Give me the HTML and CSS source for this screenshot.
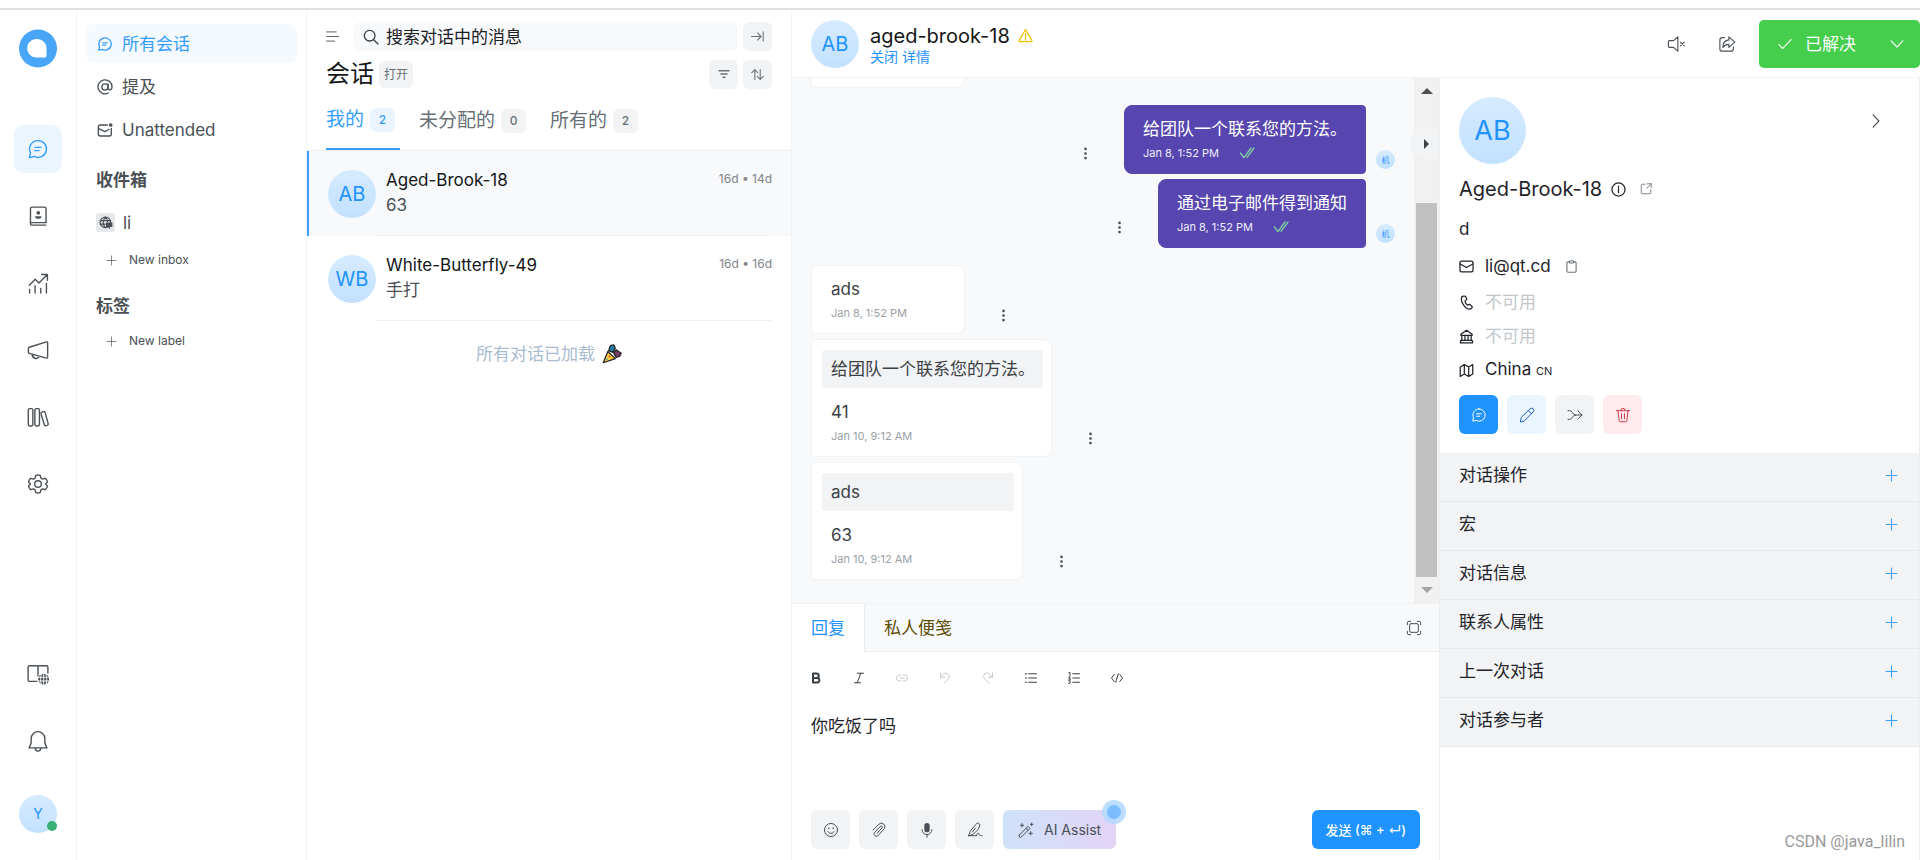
FILE: index.html
```html
<!DOCTYPE html>
<html lang="zh-CN">
<head>
    <meta charset="UTF-8">
    <meta name="viewport" content="width=device-width, initial-scale=1.0">
    <title>会话</title>
    <link rel="stylesheet" href="styles.css">
</head>
<body>
    <svg class="sprite" aria-hidden="true">
        <symbol id="chat" viewBox="0 0 24 24"><path d="M12 2.8a9.2 9.2 0 1 1-4.3 17.3L3.2 21.3a.5.5 0 0 1-.6-.6l1.3-4.4A9.2 9.2 0 0 1 12 2.8z"/><path d="M8.5 10.2h7M8.5 13.8h4.6"/></symbol>
        <symbol id="contacts" viewBox="0 0 24 24"><path d="M21 19.2H5.2a1.4 1.4 0 0 0 0 2.8H20.5M3.8 20.5V4.2A1.9 1.9 0 0 1 5.7 2.3h13.2a1.9 1.9 0 0 1 1.9 1.9v15"/><circle class="solid" cx="12.3" cy="8.6" r="2"/><path class="solid" d="M8.8 12.2h7c0 2-1.5 2.8-3.5 2.8s-3.5-.8-3.5-2.8z"/></symbol>
        <symbol id="reports" viewBox="0 0 24 24"><path d="M2.5 14.5 9 8l4 4 9-9M16 2.7h6.3V9M2.8 19v4M8.8 15v8M15 18v5M21.2 12.5V23"/></symbol>
        <symbol id="campaign" viewBox="0 0 24 24"><path d="M22.5 4.2v15.6a1 1 0 0 1-1.3 1L2.5 15.6a1.4 1.4 0 0 1-1-1.3v-4a1.4 1.4 0 0 1 1-1.3l18.700-5.800a1 1 0 0 1 1.300 1zM5.800 16.600a4 4 0 0 0 7.600 2.200"/></symbol>
        <symbol id="library" viewBox="0 0 24 24"><rect x="1.4" y="2.8" width="5" height="19" rx="1.5"/><rect x="8.6" y="2.8" width="5" height="19" rx="1.5"/><path d="m16.3 6.6 1.7-.5a1.5 1.5 0 0 1 1.8 1.1l3.3 12.1a1.5 1.5 0 0 1-1 1.8l-1.4.4a1.5 1.5 0 0 1-1.8-1L15.3 8.4a1.5 1.5 0 0 1 1-1.8z"/></symbol>
        <symbol id="settings" viewBox="0 0 24 24"><circle cx="12" cy="12" r="3.6"/><path d="M9.6 2.6Q12 1.9 14.4 2.6L15.2 5.7 17 6.7 20 5.8Q21.8 7.5 22.4 9.9L20.2 12l2.2 2.1Q21.8 16.5 20 18.2L17 17.3 15.2 18.3 14.4 21.4Q12 22.1 9.6 21.4L8.8 18.3 7 17.3 4 18.2Q2.2 16.5 1.6 14.1L3.8 12 1.6 9.9Q2.2 7.5 4 5.8L7 6.7 8.8 5.7z"/></symbol>
        <symbol id="docs" viewBox="0 0 24 24"><path d="M11 20H2.7A1.5 1.5 0 0 1 1.2 18.5v-14A1.5 1.5 0 0 1 2.7 3H10.5A1.5 1.5 0 0 1 12 4.5V14M12 4.5A1.5 1.5 0 0 1 13.5 3h7.8a1.5 1.5 0 0 1 1.5 1.5V11"/><circle class="solid" cx="18.2" cy="17.6" r="6"/><path class="cut" d="M12 15.6h12.4M12 19.6h12.4M18.2 11.5v12.2M15.6 12c-1 4-1 7.5 0 11.5M20.8 12c1 4 1 7.5 0 11.5"/></symbol>
        <symbol id="bell" viewBox="0 0 24 24"><path d="M12 1.8a7.5 7.5 0 0 0-7.5 7.5v5L2.3 19.5h19.4l-2.2-5.2v-5A7.5 7.5 0 0 0 12 1.8zM9 20a3 3 0 0 0 6 0"/></symbol>
        <symbol id="mention" viewBox="0 0 24 24"><circle cx="12" cy="12" r="4.7"/><path d="M16.7 7.3v6.2c0 4 5.8 3.6 5.8-1.5A10.5 10.5 0 1 0 17 21"/></symbol>
        <symbol id="unread" viewBox="0 0 24 24"><path d="M15.5 4.500H5a3 3 0 0 0-3 3V18a3 3 0 0 0 3 3h13.500a3 3 0 0 0 3-3V9.500M2.500 10l9.300 4.500 6-3.300"/><circle class="solid" cx="20.5" cy="4.5" r="2.8"/></symbol>
        <symbol id="globe" viewBox="0 0 24 24"><circle cx="11" cy="11" r="9"/><path d="M2 8h18M2 14h9M11 2c-5 5-5 13 0 18M11 2c2.5 2.5 3.8 5.5 3.8 8"/><path class="solid" d="M12 11h11v8h-4v3.500L15.500 19H12z"/></symbol>
        <symbol id="plus" viewBox="0 0 24 24"><path d="M12 2v20M2 12h20"/></symbol>
        <symbol id="menu" viewBox="0 0 24 24"><path d="M1 3.5h18M1 12h22M1 20.5h15"/></symbol>
        <symbol id="search" viewBox="0 0 24 24"><circle cx="10" cy="10" r="8"/><path d="m16 16 6.5 6.5"/></symbol>
        <symbol id="collapse" viewBox="0 0 24 24"><path d="M1 12h17M12 5.5l6.5 6.5-6.5 6.5M22.500 3.500v17"/></symbol>
        <symbol id="filter" viewBox="0 0 24 24"><path d="M2 5.5h20M6 12h12M10 18.5h4"/></symbol>
        <symbol id="sort" viewBox="0 0 24 24"><path d="M7 21V3M1.5 8.5 7 3l5.5 5.5M17 3v18M11.5 15.5 17 21l5.5-5.5"/></symbol>
        <symbol id="warning" viewBox="0 0 24 24"><path d="M12 2.5 22.3 20.2a1 1 0 0 1-.8 1.5H2.5a1 1 0 0 1-.8-1.5zM12 9v6M12 17v2"/></symbol>
        <symbol id="mute" viewBox="0 0 24 24"><path d="M14.5 2.500v19L8.700 16.500H3.300a1.500 1.500 0 0 1-1.500-1.500V9A1.500 1.500 0 0 1 3.300 7.500h5.400zM18 9.500l5 5M23 9.500l-5 5"/></symbol>
        <symbol id="share" viewBox="0 0 24 24"><path d="M8.5 3.500H5.500a3 3 0 0 0-3 3V18.500a3 3 0 0 0 3 3h12a3 3 0 0 0 3-3V16M14.500 2.500l8 7-8 7V12.500c-4 0-6 1-8 4 0-6 3-9.500 8-10z"/></symbol>
        <symbol id="check" viewBox="0 0 24 24"><path d="m1.5 13 6.5 6.5L22.5 4.5"/></symbol>
        <symbol id="down" viewBox="0 0 24 24"><path d="m2 6.5 10 11 10-11"/></symbol>
        <symbol id="right" viewBox="0 0 24 24"><path d="m7 1.5 10 10.5L7 22.5"/></symbol>
        <symbol id="double-check" viewBox="0 0 24 24"><path d="m2 12 5.5 7L18 4.5M12 18.5 22.5 4.5"/></symbol>
        <symbol id="dots" viewBox="0 0 24 24"><circle class="solid" cx="12" cy="3.5" r="2.5"/><circle class="solid" cx="12" cy="12" r="2.5"/><circle class="solid" cx="12" cy="20.5" r="2.5"/></symbol>
        <symbol id="expand" viewBox="0 0 24 24"><path d="M2 7V4.500A2.500 2.500 0 0 1 4.500 2H7M17 2h2.500A2.500 2.500 0 0 1 22 4.500V7M22 17v2.500a2.500 2.500 0 0 1-2.500 2.500H17M7 22H4.500A2.500 2.500 0 0 1 2 19.500V17"/><rect x="5.5" y="5.5" width="13" height="13" rx="2"/></symbol>
        <symbol id="bold" viewBox="0 0 24 24"><path d="M6 3h7a4.4 4.4 0 0 1 0 8.8H6zM6 11.8h8a4.6 4.6 0 0 1 0 9.2H6z"/></symbol>
        <symbol id="italic" viewBox="0 0 24 24"><path d="M9 2.5h12M3 21.5h12M15.5 2.5 8.5 21.5"/></symbol>
        <symbol id="link" viewBox="0 0 24 24"><path d="M9.5 6H7a6 6 0 0 0 0 12h2.500M14.500 6H17a6 6 0 0 1 0 12h-2.500M7.500 12h9"/></symbol>
        <symbol id="undo" viewBox="0 0 24 24"><path d="M3 2v8.500h8.500M3.500 10 9 4.500a6.500 6.500 0 0 1 10 9L10 22.500"/></symbol>
        <symbol id="redo" viewBox="0 0 24 24"><path d="M21 2v8.500h-8.500M20.500 10 15 4.500a6.500 6.500 0 0 0-10 9L14 22.500"/></symbol>
        <symbol id="list" viewBox="0 0 24 24"><path d="M7.5 3.5H23M7.5 12H23M7.5 20.5H23M1 3.500h2.500M1 12h2.500M1 20.500h2.500"/></symbol>
        <symbol id="ordered" viewBox="0 0 24 24"><path d="M9.5 3.5H23M9.5 12H23M9.5 20.5H23M1.5 1.5 4 .8V7M1.5 10H4.5L1.5 14.5H5M1.5 17.5H4.5L3 20c3 0 2.5 3.5-1.5 3"/></symbol>
        <symbol id="code" viewBox="0 0 24 24"><path d="M6.5 5 1 12l5.5 7M17.5 5 23 12l-5.500 7M14.500 3.500l-5 17"/></symbol>
        <symbol id="smile" viewBox="0 0 24 24"><circle cx="12" cy="12" r="9.8"/><path d="M7.5 14.5c2 3.5 7 3.5 9 0"/><circle class="solid" cx="8.7" cy="9.5" r="1.2"/><circle class="solid" cx="15.3" cy="9.5" r="1.2"/></symbol>
        <symbol id="clip" viewBox="0 0 24 24"><path d="M3 12 11.5 3.7a5.3 5.3 0 0 1 8.5 6.3l-9.5 10.5a3.6 3.6 0 0 1-5.5-4.5l9-9.5a1.7 1.7 0 0 1 2.6 2.2L9.5 16.5"/></symbol>
        <symbol id="mic" viewBox="0 0 24 24"><rect class="solid" x="8" y="1.5" width="8" height="14" rx="4"/><path d="M4.5 11.5a7.5 7.5 0 0 0 15 0M12 19v4"/></symbol>
        <symbol id="signature" viewBox="0 0 24 24"><path d="M2.500 20.500 5 13.500 13.500 3.500a3 3 0 0 1 5.500 2.500C18 10 14 15 8.500 18.500zM8 15l5-6M14 20.500c1.500-4 3.500-4.500 4-3s0 3.500 4.500 3M2.500 20.500H14"/></symbol>
        <symbol id="wand" viewBox="0 0 24 24"><path d="m2 19.5 13-13 3 3-13 13a2 2 0 0 1-3-3zM12 9.5l3 3M6 2.500v5M3.500 5h5M19 14.500v5M16.500 17h5M20.500 1.500v4M18.500 3.500h4"/></symbol>
        <symbol id="info" viewBox="0 0 24 24"><circle cx="12" cy="12" r="10.5"/><path d="M12 10.5V17M12 6.5v2"/></symbol>
        <symbol id="external" viewBox="0 0 24 24"><path d="M10 2.500H4.500a2 2 0 0 0-2 2v15a2 2 0 0 0 2 2h15a2 2 0 0 0 2-2V14M14.500 1.500h8v8M22.500 1.500 13.500 10.500"/></symbol>
        <symbol id="mail" viewBox="0 0 24 24"><rect x="1.5" y="3.5" width="21" height="17" rx="3"/><path d="m2 8 10 5.5L22 8"/></symbol>
        <symbol id="clipboard" viewBox="0 0 24 24"><path d="M8 3.500H5.500a2 2 0 0 0-2 2v15a2 2 0 0 0 2 2h13a2 2 0 0 0 2-2v-15a2 2 0 0 0-2-2H16"/><rect x="8" y="1.5" width="8" height="4" rx="2"/></symbol>
        <symbol id="phone" viewBox="0 0 24 24"><path d="M7 1.8 4.5 3C2 8 6.5 18 13 21.5c3 1.6 5.5 1.3 7.5-.7l.8-1.8-4-4-4 1.200c-2-1.700-3.300-3.900-3.800-6.400L12.500 7 10.500 2z"/></symbol>
        <symbol id="bank" viewBox="0 0 24 24"><path d="M12 2 3 8.5V10h18V8.500zM4.500 10.500V18M9.500 10.500V18M14.500 10.500V18M19.500 10.500V18M3 18h18l1 4H2z"/></symbol>
        <symbol id="map" viewBox="0 0 24 24"><path d="m2 6.500 6.500-4 7 4 6.500-4v15l-6.500 4-7-4-6.500 4zM8.500 2.500v15M15.500 6.500v15"/></symbol>
        <symbol id="pencil" viewBox="0 0 24 24"><path d="M2 22 3.5 15.500 16.500 2.800a3.300 3.300 0 0 1 4.700 4.700L8.500 20.500zM14 5.500l4.500 4.500"/></symbol>
        <symbol id="merge" viewBox="0 0 24 24"><path d="M1.5 5.500h2.500c4.500 0 4 6.500 9 6.500h9.500M1.500 18.500H4c4.500 0 4-6.500 9-6.500M16.500 6l6 6-6 6"/></symbol>
        <symbol id="trash" viewBox="0 0 24 24"><path d="M2 5.5h20M4.5 5.5l1.7 15a2 2 0 0 0 2 1.7h7.6a2 2 0 0 0 2-1.7l1.7-15M8.5 5.5a3.5 3.5 0 0 1 7 0M9.8 10v7.5M14.2 10v7.5"/></symbol>
        <symbol id="party" viewBox="0 0 24 24"><path fill="#ffc83d" stroke="#222" stroke-width="1.5" d="M7 9 1.500 22.500 16 17.500z"/><path fill="#1e7fa8" stroke="#222" d="M8 8l2-6 4-1 2 4-3 5z"/><path fill="#7a3b69" stroke="#222" d="M14 11l3-4 3 2 3 2-2 4-4 1z"/><circle cx="9" cy="15" r="1.2" fill="#e0533f" stroke="none"/><circle cx="6" cy="18.5" r="1" fill="#3f9be0" stroke="none"/></symbol>
    </svg>

    <div class="app">
        <nav class="rail" aria-label="主菜单">
            <a href="#" class="logo" aria-label="首页">
                <svg viewBox="0 0 38 38"><circle cx="19" cy="19" r="19" fill="#48a5f7"/><path fill="#fff" d="M18.5 9.5A9.3 9.3 0 1 0 18.5 28H26a1.5 1.5 0 0 0 1.500-1.500V18.500a9 9 0 0 0-9-9z"/></svg>
            </a>
            <div class="rail-menu">
                <a href="#" class="rail-link active" aria-label="会话"><svg class="icon"><use href="#chat"/></svg></a>
                <a href="#" class="rail-link" aria-label="联系人"><svg class="icon"><use href="#contacts"/></svg></a>
                <a href="#" class="rail-link" aria-label="报告"><svg class="icon"><use href="#reports"/></svg></a>
                <a href="#" class="rail-link" aria-label="活动"><svg class="icon"><use href="#campaign"/></svg></a>
                <a href="#" class="rail-link" aria-label="帮助中心"><svg class="icon"><use href="#library"/></svg></a>
                <a href="#" class="rail-link" aria-label="设置"><svg class="icon"><use href="#settings"/></svg></a>
            </div>
            <div class="rail-menu rail-bottom">
                <a href="#" class="rail-link" aria-label="文档"><svg class="icon"><use href="#docs"/></svg></a>
                <a href="#" class="rail-link" aria-label="通知"><svg class="icon"><use href="#bell"/></svg></a>
            </div>
            <button class="avatar me" aria-label="个人资料">Y<span class="status"></span></button>
        </nav>

        <aside class="sidebar">
            <ul class="side-list">
                <li><a href="#" class="side-link active"><svg class="icon"><use href="#chat"/></svg>所有会话</a></li>
                <li><a href="#" class="side-link"><svg class="icon"><use href="#mention"/></svg>提及</a></li>
                <li><a href="#" class="side-link"><svg class="icon"><use href="#unread"/></svg>Unattended</a></li>
            </ul>
            <h2 class="side-title">收件箱</h2>
            <a href="#" class="side-link"><span class="inbox-icon"><svg class="icon"><use href="#globe"/></svg></span>li</a>
            <button class="side-new"><svg class="icon"><use href="#plus"/></svg>New inbox</button>
            <h2 class="side-title second">标签</h2>
            <button class="side-new"><svg class="icon"><use href="#plus"/></svg>New label</button>
        </aside>

        <section class="chats">
            <div class="chats-search">
                <button class="plain" aria-label="菜单"><svg class="icon"><use href="#menu"/></svg></button>
                <label class="search">
                    <svg class="icon"><use href="#search"/></svg>
                    <input type="search" placeholder="搜索对话中的消息" aria-label="搜索对话中的消息">
                </label>
                <button class="small-btn" aria-label="展开"><svg class="icon"><use href="#collapse"/></svg></button>
            </div>
            <div class="chats-head">
                <h1>会话</h1>
                <span class="state">打开</span>
                <button class="small-btn first" aria-label="筛选"><svg class="icon"><use href="#filter"/></svg></button>
                <button class="small-btn" aria-label="排序"><svg class="icon"><use href="#sort"/></svg></button>
            </div>
            <div class="tabs" role="tablist">
                <button class="tab active" role="tab">我的<span class="count">2</span></button>
                <button class="tab" role="tab">未分配的<span class="count">0</span></button>
                <button class="tab" role="tab">所有的<span class="count">2</span></button>
            </div>
            <a href="#" class="chat-item active">
                <span class="avatar">AB</span>
                <span class="chat-info">
                    <span class="chat-row"><span class="chat-name">Aged-Brook-18</span><span class="chat-time">16d • 14d</span></span>
                    <span class="chat-text">63</span>
                </span>
            </a>
            <a href="#" class="chat-item">
                <span class="avatar">WB</span>
                <span class="chat-info">
                    <span class="chat-row"><span class="chat-name">White-Butterfly-49</span><span class="chat-time">16d • 16d</span></span>
                    <span class="chat-text">手打</span>
                </span>
            </a>
            <p class="chats-end">所有对话已加载 <svg class="icon party"><use href="#party"/></svg></p>
        </section>

        <main class="conversation">
            <header class="conv-head">
                <span class="avatar">AB</span>
                <div class="conv-user">
                    <h2>aged-brook-18 <svg class="icon warn"><use href="#warning"/></svg></h2>
                    <a href="#">关闭 详情</a>
                </div>
                <button class="plain head-icon" aria-label="静音"><svg class="icon"><use href="#mute"/></svg></button>
                <button class="plain head-icon" aria-label="分享"><svg class="icon"><use href="#share"/></svg></button>
                <div class="resolve">
                    <button class="resolve-main"><svg class="icon"><use href="#check"/></svg>已解决</button>
                    <button class="resolve-more" aria-label="更多"><svg class="icon"><use href="#down"/></svg></button>
                </div>
            </header>

            <div class="conv-body">
                <section class="chat-box">
                    <div class="messages-wrap">
                        <div class="messages">
                            <div class="message in"><div class="bubble cut-off"></div></div>
                            <div class="message out first">
                                <button class="plain more" aria-label="更多"><svg class="icon"><use href="#dots"/></svg></button>
                                <div class="bubble">
                                    <p>给团队一个联系您的方法。</p>
                                    <div class="meta">Jan 8, 1:52 PM<svg class="icon"><use href="#double-check"/></svg></div>
                                </div>
                                <span class="avatar bot">机</span>
                            </div>
                            <div class="message out">
                                <button class="plain more" aria-label="更多"><svg class="icon"><use href="#dots"/></svg></button>
                                <div class="bubble">
                                    <p>通过电子邮件得到通知</p>
                                    <div class="meta">Jan 8, 1:52 PM<svg class="icon"><use href="#double-check"/></svg></div>
                                </div>
                                <span class="avatar bot">机</span>
                            </div>
                            <div class="message in first">
                                <div class="bubble">
                                    <p>ads</p>
                                    <div class="meta">Jan 8, 1:52 PM</div>
                                </div>
                                <button class="plain more" aria-label="更多"><svg class="icon"><use href="#dots"/></svg></button>
                            </div>
                            <div class="message in">
                                <div class="bubble with-quote">
                                    <blockquote>给团队一个联系您的方法。</blockquote>
                                    <p>41</p>
                                    <div class="meta">Jan 10, 9:12 AM</div>
                                </div>
                                <button class="plain more" aria-label="更多"><svg class="icon"><use href="#dots"/></svg></button>
                            </div>
                            <div class="message in">
                                <div class="bubble with-quote short">
                                    <blockquote>ads</blockquote>
                                    <p>63</p>
                                    <div class="meta">Jan 10, 9:12 AM</div>
                                </div>
                                <button class="plain more" aria-label="更多"><svg class="icon"><use href="#dots"/></svg></button>
                            </div>
                        </div>
                        <div class="scrollbar" aria-hidden="true">
                            <span class="arrow up"></span>
                            <span class="track"><span class="thumb"></span></span>
                            <span class="arrow down"></span>
                        </div>
                        <button class="toggle" aria-label="收起侧栏"><span></span></button>
                    </div>

                    <form class="reply">
                        <div class="reply-tabs">
                            <button type="button" class="reply-tab active">回复</button>
                            <button type="button" class="reply-tab note">私人便笺</button>
                            <button type="button" class="plain expand" aria-label="展开"><svg class="icon"><use href="#expand"/></svg></button>
                        </div>
                        <div class="format">
                            <button type="button" class="plain bold" aria-label="粗体"><svg class="icon"><use href="#bold"/></svg></button>
                            <button type="button" class="plain" aria-label="斜体"><svg class="icon"><use href="#italic"/></svg></button>
                            <button type="button" class="plain off" aria-label="链接"><svg class="icon"><use href="#link"/></svg></button>
                            <button type="button" class="plain off" aria-label="撤销"><svg class="icon"><use href="#undo"/></svg></button>
                            <button type="button" class="plain off" aria-label="重做"><svg class="icon"><use href="#redo"/></svg></button>
                            <button type="button" class="plain" aria-label="列表"><svg class="icon"><use href="#list"/></svg></button>
                            <button type="button" class="plain" aria-label="编号列表"><svg class="icon"><use href="#ordered"/></svg></button>
                            <button type="button" class="plain" aria-label="代码"><svg class="icon"><use href="#code"/></svg></button>
                        </div>
                        <textarea class="editor" aria-label="回复内容">你吃饭了吗</textarea>
                        <div class="reply-actions">
                            <button type="button" class="tool" aria-label="表情"><svg class="icon"><use href="#smile"/></svg></button>
                            <button type="button" class="tool" aria-label="附件"><svg class="icon"><use href="#clip"/></svg></button>
                            <button type="button" class="tool" aria-label="录音"><svg class="icon"><use href="#mic"/></svg></button>
                            <button type="button" class="tool" aria-label="签名"><svg class="icon"><use href="#signature"/></svg></button>
                            <button type="button" class="ai"><svg class="icon"><use href="#wand"/></svg>AI Assist<span class="pulse"></span></button>
                            <button type="button" class="send">发送 (⌘ + ↵)</button>
                        </div>
                    </form>
                </section>

                <aside class="contact">
                    <div class="profile">
                        <div class="profile-top">
                            <span class="avatar big">AB</span>
                            <button class="plain" aria-label="关闭"><svg class="icon"><use href="#right"/></svg></button>
                        </div>
                        <h3 class="profile-name">Aged-Brook-18 <svg class="icon"><use href="#info"/></svg><svg class="icon ext"><use href="#external"/></svg></h3>
                        <p class="bio">d</p>
                        <ul class="details">
                            <li class="email"><svg class="icon"><use href="#mail"/></svg><a href="#">li@qt.cd</a><svg class="icon copy"><use href="#clipboard"/></svg></li>
                            <li class="empty"><svg class="icon"><use href="#phone"/></svg><span>不可用</span></li>
                            <li class="empty"><svg class="icon"><use href="#bank"/></svg><span>不可用</span></li>
                            <li><svg class="icon"><use href="#map"/></svg><span>China <small>CN</small></span></li>
                        </ul>
                        <div class="profile-actions">
                            <button class="tool primary" aria-label="新消息"><svg class="icon"><use href="#chat"/></svg></button>
                            <button class="tool edit" aria-label="编辑"><svg class="icon"><use href="#pencil"/></svg></button>
                            <button class="tool" aria-label="合并"><svg class="icon"><use href="#merge"/></svg></button>
                            <button class="tool delete" aria-label="删除"><svg class="icon"><use href="#trash"/></svg></button>
                        </div>
                    </div>
                    <div class="accordion">
                        <button>对话操作<svg class="icon"><use href="#plus"/></svg></button>
                        <button>宏<svg class="icon"><use href="#plus"/></svg></button>
                        <button>对话信息<svg class="icon"><use href="#plus"/></svg></button>
                        <button>联系人属性<svg class="icon"><use href="#plus"/></svg></button>
                        <button>上一次对话<svg class="icon"><use href="#plus"/></svg></button>
                        <button>对话参与者<svg class="icon"><use href="#plus"/></svg></button>
                    </div>
                    <p class="credit">CSDN @java_lilin</p>
                </aside>
            </div>
        </main>
    </div>
</body>
</html>
```

FILE: styles.css
```css
* {
    box-sizing: border-box;
}

body {
    margin: 0;
    padding-top: 8px;
    height: 100vh;
    background-color: #fff;
    color: #1f2d3d;
    font-family: Inter, "Noto Sans CJK SC", sans-serif;
    font-size: 17px;
    line-height: 24px;
    display: flex;
    flex-direction: column;
}

h1, h2, h3, p, ul, blockquote {
    margin: 0;
    padding: 0;
    font-weight: 400;
}

ul {
    list-style: none;
}

a {
    color: inherit;
    text-decoration: none;
}

button, input, textarea {
    font: inherit;
    color: inherit;
    border: none;
    margin: 0;
    padding: 0;
    background: none;
}

button {
    cursor: pointer;
}

/* Iconos */
.sprite {
    display: none;
}

.icon {
    width: 16px;
    height: 16px;
    flex: none;
    fill: none;
    stroke: currentColor;
    stroke-width: 1.5;
    stroke-linecap: round;
    stroke-linejoin: round;
}

.solid {
    fill: currentColor;
    stroke: none;
}

.cut {
    stroke: #fff;
    stroke-width: 1;
}

.plain {
    display: flex;
    align-items: center;
    justify-content: center;
}

.app {
    flex: 1;
    min-height: 0;
    display: flex;
    border-top: 2px solid #e0e0e0;
}

.avatar {
    position: relative;
    flex: none;
    display: flex;
    align-items: center;
    justify-content: center;
    width: 48px;
    height: 48px;
    border-radius: 50%;
    background: linear-gradient(#d6ebff, #c2e1ff);
    color: #1f93ff;
    font-size: 20px;
}

/* Barra izquierda */
.rail {
    width: 77px;
    flex: none;
    display: flex;
    flex-direction: column;
    align-items: center;
    padding: 19px 0 27px;
    border-right: 1px solid #f0f2f4;
    color: #4a5056;
}

.logo, .logo svg {
    display: block;
    width: 38px;
    height: 39px;
}

.rail-menu {
    display: flex;
    flex-direction: column;
    gap: 19px;
    margin-top: 57px;
}

.rail-link {
    display: flex;
    align-items: center;
    justify-content: center;
    width: 48px;
    height: 48px;
    border-radius: 10px;
}

.rail-link .icon {
    width: 22px;
    height: 22px;
}

.rail-link.active {
    background-color: #ebf5ff;
    color: #369eff;
}

.rail-bottom {
    margin-top: auto;
    margin-bottom: 30px;
}

.me {
    width: 38px;
    height: 38px;
    font-size: 14px;
    background: linear-gradient(#d6ebff, #c2e1ff);
    color: #1f93ff;
}

.status {
    position: absolute;
    right: 0;
    bottom: 2px;
    width: 10px;
    height: 10px;
    border-radius: 50%;
    background-color: #3bb077;
}

/* Sidebar */
.sidebar {
    width: 230px;
    flex: none;
    padding: 14px 9px;
    border-right: 1px solid #f0f2f4;
    color: #4a5056;
}

.side-list {
    display: flex;
    flex-direction: column;
    gap: 4px;
}

.side-link {
    display: flex;
    align-items: center;
    gap: 9px;
    height: 39px;
    padding: 0 11px;
    border-radius: 8px;
}

.side-link .icon {
    stroke-width: 2;
}

.side-link.active {
    background-color: #f5faff;
    color: #369eff;
}

.side-title {
    margin: 19px 0 11px;
    padding-left: 10px;
    font-size: 17px;
    line-height: 24px;
    font-weight: 700;
}

.side-title.second {
    margin-top: 22px;
}

.inbox-icon {
    display: flex;
    align-items: center;
    justify-content: center;
    width: 19px;
    height: 19px;
    margin-left: -1px;
    margin-right: -1px;
    border-radius: 3px;
    background-color: #e6e8eb;
}

.inbox-icon .icon {
    width: 14px;
    height: 14px;
}

.side-new {
    display: flex;
    align-items: center;
    gap: 12px;
    height: 24px;
    margin-top: 6px;
    padding-left: 20px;
    font-size: 12px;
    line-height: 24px;
}

.side-title + .side-new {
    margin-top: 0;
}

.side-new .icon {
    width: 11px;
    height: 11px;
}

/* Lista de conversaciones */
.chats {
    width: 485px;
    flex: none;
    padding-top: 12px;
    border-right: 1px solid #f0f2f4;
}

.chats-search, .chats-head {
    display: flex;
    align-items: center;
    padding: 0 19px;
}

.chats-search {
    gap: 5px;
    color: #3b4045;
}

.chats-search .plain {
    width: 13px;
    margin-right: 9px;
}

.chats-search .plain .icon {
    width: 13px;
    height: 13px;
}

.search {
    flex: 1;
    display: flex;
    align-items: center;
    gap: 7px;
    height: 29px;
    padding-left: 10px;
    border-radius: 8px;
    background-color: #f8f9fb;
}

.search .icon {
    stroke-width: 2;
}

.search input {
    flex: 1;
    min-width: 0;
    outline: none;
}

.search input::placeholder {
    color: #1b2025;
    opacity: 1;
}

.small-btn {
    display: flex;
    align-items: center;
    justify-content: center;
    width: 29px;
    height: 29px;
    border-radius: 6px;
    background-color: #f1f3f5;
    color: #6b7278;
}

.small-btn .icon {
    width: 13px;
    height: 13px;
    stroke-width: 2;
}

.chats-head {
    gap: 5px;
    margin-top: 6px;
    height: 34px;
}

.chats-head h1 {
    font-size: 24px;
    line-height: 34px;
    color: #151718;
}

.state {
    padding: 0 5px;
    border-radius: 6px;
    background-color: #f1f3f5;
    color: #687076;
    font-size: 12px;
    line-height: 27px;
}

.small-btn.first {
    margin-left: auto;
}

.small-btn.first .icon {
    width: 12px;
    height: 12px;
    stroke-width: 3;
}

.tabs {
    display: flex;
    gap: 24px;
    margin-top: 10px;
    padding: 0 19px;
    border-bottom: 1px solid #eceef0;
}

.tab {
    display: flex;
    align-items: center;
    height: 49px;
    gap: 6px;
    padding-bottom: 9px;
    color: #687076;
    font-size: 19px;
}

.tab.active {
    padding-right: 5px;
    margin-right: -5px;
    border-bottom: 2px solid #369eff;
    margin-bottom: -1px;
    color: #369eff;
}

.count {
    min-width: 25px;
    border-radius: 6px;
    background-color: #f1f3f5;
    font-size: 12px;
    font-weight: 500;
    line-height: 24px;
}

.tab.active .count {
    background-color: #ebf5ff;
}

.chat-item {
    display: flex;
    align-items: center;
    height: 85px;
    padding: 0 19px;
    border-left: 2px solid transparent;
}

.chat-item.active {
    border-left-color: #369eff;
    background-color: #f8f9fb;
}

.chat-info {
    flex: 1;
    align-self: stretch;
    padding: 17px 0 0 10px;
    border-bottom: 1px solid #eff1f3;
}

.chat-row {
    display: flex;
    justify-content: space-between;
    line-height: 25px;
}

.chat-name {
    color: #151718;
}

.chat-time {
    font-size: 12px;
    line-height: 22px;
    color: #7c848b;
}

.chat-text {
    display: block;
    line-height: 25px;
    color: #4a5056;
}

.chats-end {
    display: flex;
    align-items: center;
    justify-content: center;
    gap: 7px;
    padding: 21px 0;
    color: #a9bccf;
}

.party {
    width: 20px;
    height: 20px;
}

/* Conversación */
.conversation {
    flex: 1;
    min-width: 0;
    display: flex;
    flex-direction: column;
}

.conv-head {
    display: flex;
    align-items: center;
    height: 68px;
    padding-left: 19px;
    border-bottom: 1px solid #f0f2f4;
}

.conv-user {
    flex: 1;
    padding: 2px 0 0 11px;
}

.conv-user h2 {
    display: flex;
    align-items: center;
    gap: 8px;
    font-size: 20px;
    line-height: 24px;
    color: #151718;
}

.conv-user a {
    display: block;
    font-size: 14px;
    line-height: 18px;
    color: #1f93ff;
}

.conv-user .warn {
    width: 15px;
    height: 15px;
    stroke-width: 2;
    color: #f0c000;
}

.head-icon {
    width: 48px;
    height: 48px;
    color: #4a5056;
}

.head-icon + .head-icon {
    margin: 0 8px 0 3px;
}

.head-icon .icon {
    width: 18px;
    height: 18px;
}

.resolve {
    display: flex;
    height: 48px;
    border-radius: 5px;
    background-color: #44ce4b;
    color: #fff;
}

.resolve-main {
    display: flex;
    align-items: center;
    gap: 13px;
    padding: 0 18px 0 19px;
}

.resolve-main .icon, .resolve-more .icon {
    width: 14px;
    height: 14px;
    stroke-width: 2;
}

.resolve-more {
    width: 46px;
    display: flex;
    align-items: center;
    justify-content: center;
}

.conv-body {
    flex: 1;
    min-height: 0;
    display: flex;
}

.chat-box {
    flex: 1;
    min-width: 0;
    display: flex;
    flex-direction: column;
    background-color: #fff;
}

.messages-wrap {
    position: relative;
    flex: 1;
    min-height: 0;
    display: flex;
    background-color: #f8f9fb;
}

.messages {
    flex: 1;
    overflow: hidden;
    display: flex;
    flex-direction: column;
    justify-content: flex-end;
    gap: 5px;
    padding: 0 19px 23px;
}

.message {
    flex: none;
    display: flex;
    align-items: flex-end;
}

.message.first {
    margin-top: 12px;
}

.message.out {
    justify-content: flex-end;
}

.bubble {
    padding: 10px 18px 9px;
    border: 1px solid #f0f2f4;
    border-radius: 4px 8px 8px 4px;
    background-color: #fff;
    color: #3b4045;
}

.bubble p {
    line-height: 26px;
}

.in .bubble {
    min-width: 154px;
    padding-left: 19px;
}

.cut-off {
    height: 69px;
}

.out .bubble {
    border-color: #5746af;
    border-radius: 8px 4px 4px 8px;
    background-color: #5746af;
    color: #fff;
}

.meta {
    display: flex;
    align-items: center;
    gap: 20px;
    font-size: 11px;
    line-height: 22px;
    color: #9ba1a6;
}

.out .meta {
    color: #f0edff;
}

.meta .icon {
    color: #7fd0a0;
    stroke-width: 2;
}

.in .bubble.with-quote {
    padding: 10px 8px 9px 10px;
}

.with-quote p, .with-quote .meta {
    padding-left: 9px;
}

.in .with-quote.short {
    min-width: 212px;
}

blockquote {
    margin-bottom: 11px;
    padding: 7px 8px 7px 9px;
    border-radius: 3px;
    background-color: #f1f3f5;
}

.more {
    width: 13px;
    height: 13px;
    margin: 0 0 12px 32px;
    color: #4a5056;
}

.out .more {
    margin: 0 32px 14px 0;
}

.more .icon {
    width: 13px;
    height: 13px;
}

.bot {
    width: 19px;
    height: 19px;
    margin: 0 0 5px 10px;
    font-size: 8px;
}

.scrollbar {
    width: 25px;
    display: flex;
    flex-direction: column;
    align-items: center;
    background-color: #f1f1f1;
}

.track {
    flex: 1;
    width: 21px;
    display: flex;
    align-items: flex-end;
}

.thumb {
    width: 100%;
    height: 79%;
    background-color: #c1c1c1;
}

.arrow {
    border: 6px solid transparent;
}

.arrow.up {
    border-top: none;
    border-bottom-color: #505050;
    margin: 10px 0;
}

.arrow.down {
    border-bottom: none;
    border-top-color: #a3a3a3;
    margin: 10px 0;
}

.toggle {
    position: absolute;
    top: 51px;
    right: 0;
    display: flex;
    align-items: center;
    justify-content: center;
    width: 29px;
    height: 29px;
    padding-left: 4px;
    border-radius: 14px 0 0 14px;
    background-color: #f1f3f5;
}

.toggle span {
    border: 5px solid transparent;
    border-left-color: #3b4045;
    border-right: none;
}

/* Respuesta */
.reply {
    border-top: 1px solid #f0f2f4;
}

.reply-tabs {
    display: flex;
    height: 48px;
    background-color: #f8f9fb;
    border-bottom: 1px solid #eceef0;
}

.reply-tab {
    padding: 0 19px;
}

.reply-tab.active {
    margin-bottom: -1px;
    border-right: 1px solid #eceef0;
    background-color: #fff;
    color: #1f93ff;
}

.reply-tab.note {
    color: #5c4b00;
}

.expand {
    margin-left: auto;
    margin-right: 17px;
    color: #4a5056;
}

.format {
    display: flex;
    gap: 29px;
    padding: 19px 17px 0;
    color: #3b4045;
}

.format .plain {
    width: 14px;
    height: 14px;
}

.format .icon {
    width: 12px;
    height: 12px;
    stroke-width: 2;
}

.format .bold .icon {
    stroke-width: 4;
}

.format .off {
    color: #c5c9cd;
}

.editor {
    display: block;
    width: 100%;
    height: 96px;
    margin: 29px 0 0;
    padding: 0 19px;
    resize: none;
    outline: none;
    color: #1f2329;
}

.reply-actions {
    display: flex;
    gap: 9px;
    padding: 0 19px 11px;
}

.tool {
    display: flex;
    align-items: center;
    justify-content: center;
    width: 39px;
    height: 39px;
    border-radius: 6px;
    background-color: #f1f3f5;
    color: #4a5056;
}

.ai {
    position: relative;
    display: flex;
    align-items: center;
    gap: 10px;
    padding: 0 15px;
    border-radius: 6px;
    background: linear-gradient(90deg, #cfe2f9, #e3d4f7);
    color: #4a5056;
    font-size: 14px;
}

.pulse {
    position: absolute;
    top: -10px;
    right: -10px;
    width: 24px;
    height: 24px;
    border: 5px solid #b5dbff;
    border-radius: 50%;
    background-color: #70b8ff;
    opacity: 0.9;
}

.send {
    margin-left: auto;
    padding: 0 14px;
    border-radius: 6px;
    background-color: #1f93ff;
    color: #fff;
    font-size: 13px;
    font-weight: 500;
}

/* Contacto */
.contact {
    width: 481px;
    flex: none;
    display: flex;
    flex-direction: column;
    border-left: 1px solid #eceef0;
    border-right: 1px solid #eceef0;
    color: #1f2329;
}

.profile {
    padding: 19px;
}

.profile-top {
    display: flex;
    justify-content: space-between;
    align-items: flex-start;
}

.big {
    width: 67px;
    height: 67px;
    font-size: 27px;
}

.profile-top .plain {
    width: 48px;
    height: 48px;
    color: #4a5056;
}

.profile-top .icon {
    width: 14px;
    height: 14px;
    stroke-width: 2;
}

.profile-name {
    display: flex;
    align-items: center;
    gap: 9px;
    margin-top: 13px;
    font-size: 20px;
    line-height: 24px;
}

.profile-name .icon {
    width: 15px;
    height: 15px;
    stroke-width: 2;
}

.profile-name .ext {
    width: 12px;
    height: 12px;
    margin-left: 5px;
    color: #7c848b;
}

.bio {
    margin-top: 16px;
}

.details {
    margin-top: 8px;
}

.details li {
    display: flex;
    align-items: center;
    gap: 11px;
    height: 34px;
}

.details .email {
    margin-bottom: 2px;
}

.details .icon {
    width: 15px;
    height: 15px;
    stroke-width: 2;
}

.details .copy {
    width: 13px;
    height: 13px;
    margin-left: 3px;
    color: #687076;
}

.details .empty span {
    color: #c1c8cd;
}

.details small {
    font-size: 11px;
}

.profile-actions {
    display: flex;
    gap: 9px;
    margin-top: 8px;
}

.tool.primary {
    background-color: #1f93ff;
    color: #fff;
}

.tool.edit {
    background-color: #ebf5ff;
    color: #1d64b4;
}

.tool.delete {
    background-color: #ffebee;
    color: #d13c46;
}

.accordion button {
    display: flex;
    align-items: center;
    justify-content: space-between;
    width: 100%;
    height: 49px;
    padding: 0 21px 4px 19px;
    border-bottom: 1px solid #e6e8eb;
    background-color: #f1f3f5;
}

.accordion .icon {
    width: 13px;
    height: 13px;
    stroke-width: 2;
    color: #369eff;
}

.credit {
    margin-top: auto;
    padding: 0 14px 6px;
    text-align: right;
    font-family: Roboto, sans-serif;
    font-size: 16px;
    color: #999;
}
```
